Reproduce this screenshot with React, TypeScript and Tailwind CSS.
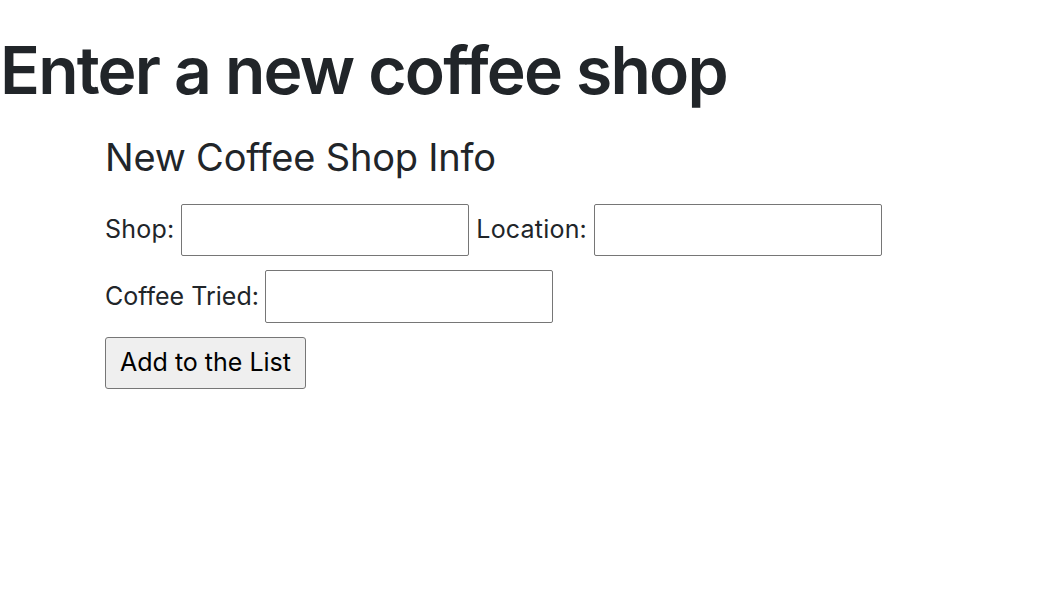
import React from "react";

const App = () => {
  const [form, setForm] = React.useState({ shop: "", location: "", coffee: "" });

  const handleChange = (e: React.ChangeEvent<HTMLInputElement>) => {
    const { name, value } = e.target;
    setForm((prev) => ({ ...prev, [name]: value }));
  };

  return (
    <div
      className="min-h-[610px] bg-white text-[#212529]"
      style={{ fontFamily: "Inter, 'Liberation Sans', sans-serif" }}
    >
      <h1 className="pt-[31px] text-[66px] font-[560] leading-[1.2] tracking-[-1.8px]">
        Enter a new coffee shop
      </h1>
      <div className="pl-[105px] pt-[25px]">
        <h5 className="text-[38px] leading-[1.2] tracking-[-0.2px] mb-[23px]">New Coffee Shop Info</h5>
        <form className="flex flex-col gap-[14px] text-[25px]">
          <div className="flex items-center gap-[7px]">
            <label className="tracking-[0.2px]">Shop:</label>
            <input
              name="shop"
              value={form.shop}
              onChange={handleChange}
              className="w-[288px] h-[52px] border border-[#767676] rounded-[2px] px-2"
            />
            <label className="tracking-[0.2px]">Location:</label>
            <input
              name="location"
              value={form.location}
              onChange={handleChange}
              className="w-[288px] h-[52px] border border-[#767676] rounded-[2px] px-2"
            />
          </div>
          <div className="flex items-center gap-[6px]">
            <label>Coffee Tried:</label>
            <input
              name="coffee"
              value={form.coffee}
              onChange={handleChange}
              className="w-[288px] h-[53px] border border-[#767676] rounded-[2px] px-2"
            />
          </div>
          <div>
            <button
              type="button"
              className="w-[201px] h-[52px] bg-[#efefef] border border-[#767676] rounded-[3px] text-black"
            >
              Add to the List
            </button>
          </div>
        </form>
      </div>
    </div>
  );
};

export default App;
